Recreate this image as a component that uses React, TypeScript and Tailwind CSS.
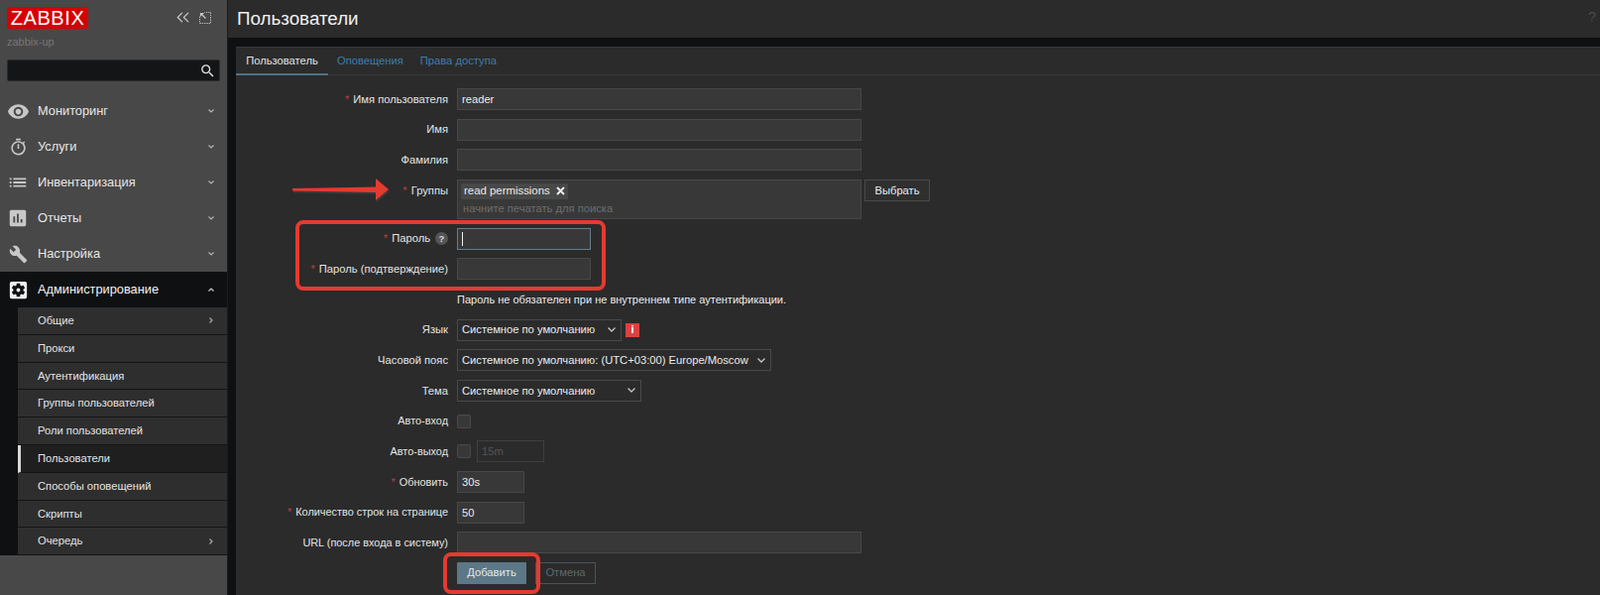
import { ChevronsLeft } from "lucide-react";
import type { ReactNode } from "react";
import {
  MdBuild,
  MdInsertChart,
  MdList,
  MdOutlineTimer,
  MdRemoveRedEye,
  MdSearch,
  MdSettingsApplications,
} from "react-icons/md";

const menu = [
  { label: "Мониторинг", icon: <MdRemoveRedEye size={23} /> },
  { label: "Услуги", icon: <MdOutlineTimer size={19} /> },
  { label: "Инвентаризация", icon: <MdList size={22} /> },
  { label: "Отчеты", icon: <MdInsertChart size={22} /> },
  { label: "Настройка", icon: <MdBuild size={19} /> },
];

const submenu = [
  { label: "Общие", more: true },
  { label: "Прокси" },
  { label: "Аутентификация" },
  { label: "Группы пользователей" },
  { label: "Роли пользователей" },
  { label: "Пользователи", active: true },
  { label: "Способы оповещений" },
  { label: "Скрипты" },
  { label: "Очередь", more: true },
];

function Chevron({ up = false, className = "" }: { up?: boolean; className?: string }) {
  return (
    <svg width="6" height="4" viewBox="0 0 6 4" fill="none" stroke="currentColor" strokeWidth="1.2" className={className}>
      <path d={up ? "M0.5 3.5L3 1l2.5 2.5" : "M0.5 0.5L3 3l2.5-2.5"} />
    </svg>
  );
}

function Row({ label, required, help, compact, children }: { label?: string; required?: boolean; help?: boolean; compact?: boolean; children: ReactNode }) {
  return (
    <div className="flex items-start gap-[9px] mb-[8.67px]">
      <div className={`w-[214px] h-[22px] flex items-center justify-end text-[#e4e4e4] whitespace-nowrap ${compact ? "text-[10.9px]" : ""}`}>
        {required && <span className="text-[#b5403c] mr-[4px]">*</span>}
        {label}
        {help && (
          <span className="ml-[5px] w-[13px] h-[13px] rounded-full bg-[#555] text-[9.5px] font-bold text-[#ddd] flex items-center justify-center">?</span>
        )}
      </div>
      {children}
    </div>
  );
}

function Field({ width, value = "", focused, disabled }: { width: string; value?: string; focused?: boolean; disabled?: boolean }) {
  return (
    <input
      readOnly
      value={value}
      className={`${width} h-[22px] px-[4px] border outline-none ${
        focused ? "border-[#667f8b] bg-[#383838]" : disabled ? "border-[#3f3f3f] bg-[#2b2b2b] text-[#555]" : "border-[#484848] bg-[#383838] text-[#ececec]"
      }`}
    />
  );
}

function Select({ width, value }: { width: string; value: string }) {
  return (
    <div className={`${width} h-[22px] pl-[4px] pr-[5px] flex items-center justify-between border border-[#4a4a4a] bg-[#2b2b2b] text-[#ececec] whitespace-nowrap`}>
      {value}
      <svg width="8" height="5" viewBox="0 0 8 5" fill="none" stroke="#c4c4c4" strokeWidth="1.3">
        <path d="M0.5 0.5L4 4l3.5-3.5" />
      </svg>
    </div>
  );
}

function Checkbox() {
  return <div className="w-[14px] h-[14px] mt-[4px] rounded-[2px] border border-[#4a4a4a] bg-[#383838]" />;
}

export default function App() {
  return (
    <div className="relative flex h-[600px] w-[1614px] overflow-hidden bg-[#0e1012] font-['Liberation_Sans',Arial,sans-serif] text-[11.2px]">
      <aside className="flex w-[230px] shrink-0 flex-col border-r border-[#1c1c1c] bg-[#484848]">
        <div className="flex items-start justify-between pl-[7px] pr-[16px] pt-[7px]">
          <div className="flex h-[22px] w-[82px] items-center justify-center bg-[#d40000] text-[20px] leading-none tracking-[0.6px] text-white">ZABBIX</div>
          <div className="flex items-center gap-[6px] text-[#c8c8c8]">
            <ChevronsLeft size={21} strokeWidth={1.4} />
            <svg width="12" height="12" viewBox="0 0 13 13" fill="none" stroke="currentColor">
              <path d="M0.5 5V12.5H12.5V0.5H6" strokeDasharray="1.5 1" />
              <path d="M1 1h4.5L1 5.5z" fill="currentColor" stroke="none" />
              <path d="M3 3l4 4" strokeWidth="1.3" />
            </svg>
          </div>
        </div>
        <div className="pl-[7px] pt-[7px] text-[#777] text-[11px] leading-[13px]">zabbix-up</div>
        <div className="mx-[7px] mt-[11px] flex h-[22px] items-center justify-end rounded-[2px] border border-[#2a2a2a] bg-[#131517] pr-[3px] text-[#e0e0e0]">
          <MdSearch size={17} />
        </div>
        <nav className="mt-[12px] text-[12.8px] text-[#e6e6e6]">
          {menu.map((item) => (
            <div key={item.label} className="flex h-[36px] items-center pr-[13px]">
              <div className="flex w-[38px] shrink-0 justify-center pr-[2px] text-[#c8c8c8]">{item.icon}</div>
              <span className="flex-1">{item.label}</span>
              <Chevron className="text-[#b4b4b4]" />
            </div>
          ))}
          <div className="flex h-[36px] items-center bg-[#0e1012] pr-[13px] text-[#f4f4f4]">
            <div className="flex w-[38px] shrink-0 justify-center pr-[2px] text-[#f0f0f0]">
              <MdSettingsApplications size={23} />
            </div>
            <span className="flex-1">Администрирование</span>
            <Chevron up className="text-[#ccc]" />
          </div>
        </nav>
        <div className="bg-[#0e1012] pl-[18px] text-[#e4e4e4]">
          {submenu.map((item) => (
            <div
              key={item.label}
              className={`flex h-[27.8px] items-center border-b border-[#141414] pl-[20px] pr-[13px] ${
                item.active ? "border-l-[3px] border-l-[#d8d8d8] bg-[#1f1f1f] !pl-[17px]" : "bg-[#2e2e2e]"
              }`}
            >
              <span className="flex-1">{item.label}</span>
              {item.more && <Chevron className="-rotate-90 text-[#a8a8a8]" />}
            </div>
          ))}
        </div>
      </aside>

      <main className="flex min-w-0 flex-1 flex-col">
        <header className="flex h-[38px] items-center justify-between bg-[#2b2b2b] pl-[9px] pr-[4px]">
          <h1 className="text-[18.8px] text-[#f0f0f0]">Пользователи</h1>
          <span className="mb-[4px] text-[15px] text-[#4a4a4a]">?</span>
        </header>
        <section className="ml-[8px] mt-[9px] flex-1 border-t border-[#383838] bg-[#2b2b2b]">
          <div className="flex h-[28px] items-stretch border-b border-[#383838]">
            <div className="flex w-[93px] items-center justify-center border-b-[2px] border-b-[#4f7184] -mb-px text-[#e4e4e4]">Пользователь</div>
            <div className="ml-[9px] flex items-center text-[#3f7eaa]">Оповещения</div>
            <div className="ml-[17px] flex items-center text-[#3f7eaa]">Права доступа</div>
          </div>
          <div className="pt-[13px]">
            <Row label="Имя пользователя" required>
              <Field width="w-[408px]" value="reader" />
            </Row>
            <Row label="Имя">
              <Field width="w-[408px]" />
            </Row>
            <Row label="Фамилия">
              <Field width="w-[408px]" />
            </Row>
            <Row label="Группы" required>
              <div className="h-[40px] w-[408px] border border-[#484848] bg-[#383838] px-[3px] pt-[3px]">
                <div className="flex h-[16px] w-fit items-center gap-[6px] rounded-[1px] bg-[#484848] pl-[3px] pr-[3px] text-[11.4px] text-[#ececec]">
                  read permissions
                  <svg width="9" height="9" viewBox="0 0 9 9" stroke="#ececec" strokeWidth="2">
                    <path d="M1 1l7 7M8 1l-7 7" />
                  </svg>
                </div>
                <div className="mt-[1px] pl-[2px] text-[#6e6e6e]">начните печатать для поиска</div>
              </div>
              <button className="-ml-[6px] h-[22px] w-[66px] border border-[#4a4a4a] bg-[#2f2f2f] text-[#ececec]">Выбрать</button>
            </Row>
            <Row label="Пароль" required help>
              <div className="relative">
                <Field width="w-[135px]" focused />
                <span className="absolute left-[5px] top-[4px] h-[14px] w-px bg-[#f0f0f0]" />
              </div>
            </Row>
            <Row label="Пароль (подтверждение)" required>
              <Field width="w-[135px]" />
            </Row>
            <Row>
              <div className="flex h-[22px] items-center text-[11px] text-[#ececec]">Пароль не обязателен при не внутреннем типе аутентификации.</div>
            </Row>
            <Row label="Язык">
              <Select width="w-[166px]" value="Системное по умолчанию" />
              <div className="-ml-[5px] mt-[4px] flex h-[14px] w-[14px] items-center justify-center bg-[#d9423f] text-[11px] font-bold text-white">i</div>
            </Row>
            <Row label="Часовой пояс">
              <Select width="w-[317px]" value="Системное по умолчанию: (UTC+03:00) Europe/Moscow" />
            </Row>
            <Row label="Тема">
              <Select width="w-[186px]" value="Системное по умолчанию" />
            </Row>
            <Row label="Авто-вход" compact>
              <Checkbox />
            </Row>
            <Row label="Авто-выход" compact>
              <Checkbox />
              <div className="-ml-[3px]">
                <Field width="w-[68px]" value="15m" disabled />
              </div>
            </Row>
            <Row label="Обновить" required compact>
              <Field width="w-[68px]" value="30s" />
            </Row>
            <Row label="Количество строк на странице" required compact>
              <Field width="w-[68px]" value="50" />
            </Row>
            <Row label="URL (после входа в систему)" compact>
              <Field width="w-[408px]" />
            </Row>
            <div className="ml-[223px] flex gap-[9px]">
              <button className="h-[22px] w-[70px] rounded-[1px] bg-[#5c7786] text-[#e8e8e8]">Добавить</button>
              <button className="h-[22px] w-[61px] border border-[#45565f] text-[#5b6a72]">Отмена</button>
            </div>
          </div>
        </section>
      </main>

      {/* red callouts drawn on top of the screenshot */}
      <div className="pointer-events-none absolute left-[298px] top-[222px] h-[71px] w-[313px] rounded-[8px] border-[4px] border-[#e53a30]" />
      <div className="pointer-events-none absolute left-[447px] top-[557px] h-[42px] w-[98px] rounded-[8px] border-[4px] border-[#e53a30]" />
      <svg className="pointer-events-none absolute left-[294px] top-[178px]" width="102" height="28" viewBox="0 0 102 28">
        <path d="M2 14L86 12.5V4L99 15L86 26V18L2 16.5Z" fill="#3a3a3a" />
        <path d="M1 12L85 10.5V2L98 13L85 24V16L1 14.5Z" fill="#e53a30" />
      </svg>
    </div>
  );
}
